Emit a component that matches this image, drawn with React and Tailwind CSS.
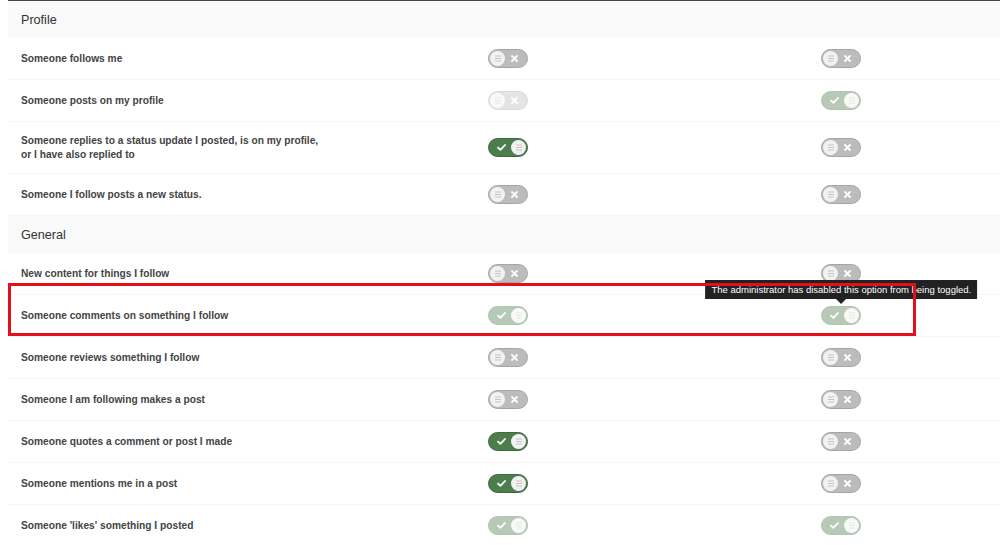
import React from "react";

function Lines() {
  return (
    <svg width="8" height="7" viewBox="0 0 8 7">
      <path d="M1 1h6M1 3.5h6M1 6h6" stroke="#c4c4c4" strokeWidth="1" fill="none" />
    </svg>
  );
}

function XIcon() {
  return (
    <svg width="7" height="7" viewBox="0 0 7 7">
      <path d="M1 1l5 5M6 1l-5 5" stroke="#ffffff" strokeWidth="1.8" strokeLinecap="round" fill="none" />
    </svg>
  );
}

function Check() {
  return (
    <svg width="9" height="7" viewBox="0 0 9 7">
      <path d="M1 3.6l2.4 2.2L8 1" stroke="#ffffff" strokeWidth="1.8" strokeLinecap="round" strokeLinejoin="round" fill="none" />
    </svg>
  );
}

function Toggle({ on, disabled }) {
  const base = "flex items-center w-[40px] h-[19px] rounded-full border px-[1px] box-border";
  const look = on ? "bg-[#4d7c4d] border-[#3e6a3e]" : "bg-[#bcbcbc] border-[#a5a5a5]";
  const op = disabled ? "opacity-40" : "";
  return (
    <div className={`${base} ${look} ${op}`}>
      {on ? (
        <>
          <div className="flex-1 flex justify-center pl-[2px]"><Check /></div>
          <div className="w-[15px] h-[15px] rounded-full bg-[#f2f2f2] flex items-center justify-center"><Lines /></div>
        </>
      ) : (
        <>
          <div className="w-[15px] h-[15px] rounded-full bg-[#f2f2f2] flex items-center justify-center"><Lines /></div>
          <div className="flex-1 flex justify-center pr-[2px]"><XIcon /></div>
        </>
      )}
    </div>
  );
}

function Header({ title }) {
  return (
    <div className="h-[37px] bg-[#f9f9f9] flex items-center pl-[13px] pt-[1px] text-[12.6px] text-[#333] font-['Liberation_Sans',Arial,sans-serif]">
      {title}
    </div>
  );
}

function Row({ label, a, b, tall, overlay }) {
  return (
    <div className={`relative grid grid-cols-3 items-center border-b border-[#f4f4f4] ${tall ? "h-[52px]" : "h-[42px]"}`}>
      <div className="pl-[13px] text-[10.2px] font-bold text-[#444] leading-[14px] whitespace-nowrap font-['Liberation_Sans',Arial,sans-serif]">
        {label}
      </div>
      <div className="flex justify-center pl-[1px]">
        <Toggle on={a.on} disabled={a.dis} />
      </div>
      <div className="flex justify-center relative">
        {overlay && (
          <div className="absolute bottom-[21px] left-1/2 -translate-x-1/2 flex flex-col items-center z-10">
            <div className="whitespace-nowrap bg-[#222] text-white text-[9.5px] leading-[19px] h-[19px] px-[6px] font-['Liberation_Sans',Arial,sans-serif]">
              The administrator has disabled this option from being toggled.
            </div>
            <div className="w-0 h-0 border-l-[5px] border-r-[5px] border-t-[5px] border-l-transparent border-r-transparent border-t-[#222]" />
          </div>
        )}
        <Toggle on={b.on} disabled={b.dis} />
      </div>
      {overlay && (
        <div className="absolute left-0 top-[-12px] w-[908px] h-[53px] border-[3px] border-[#e3101c] z-20 pointer-events-none" />
      )}
    </div>
  );
}

const OFF = { on: false };
const ON = { on: true };
const OFFD = { on: false, dis: true };
const OND = { on: true, dis: true };

export default function App() {
  return (
    <div className="w-[1000px] h-[545px] overflow-hidden bg-white">
      <div className="ml-[8px] w-[1000px] border-t border-[#444] relative">
        <Header title="Profile" />
        <Row label="Someone follows me" a={OFF} b={OFF} />
        <Row label="Someone posts on my profile" a={OFFD} b={OND} />
        <Row
          tall
          label={<>Someone replies to a status update I posted, is on my profile,<br />or I have also replied to</>}
          a={ON}
          b={OFF}
        />
        <Row label="Someone I follow posts a new status." a={OFF} b={OFF} />
        <Header title="General" />
        <Row label="New content for things I follow" a={OFF} b={OFF} />
        <Row label="Someone comments on something I follow" a={OND} b={OND} overlay />
        <Row label="Someone reviews something I follow" a={OFF} b={OFF} />
        <Row label="Someone I am following makes a post" a={OFF} b={OFF} />
        <Row label="Someone quotes a comment or post I made" a={ON} b={OFF} />
        <Row label="Someone mentions me in a post" a={ON} b={OFF} />
        <Row label="Someone 'likes' something I posted" a={OND} b={OND} />
      </div>
    </div>
  );
}
